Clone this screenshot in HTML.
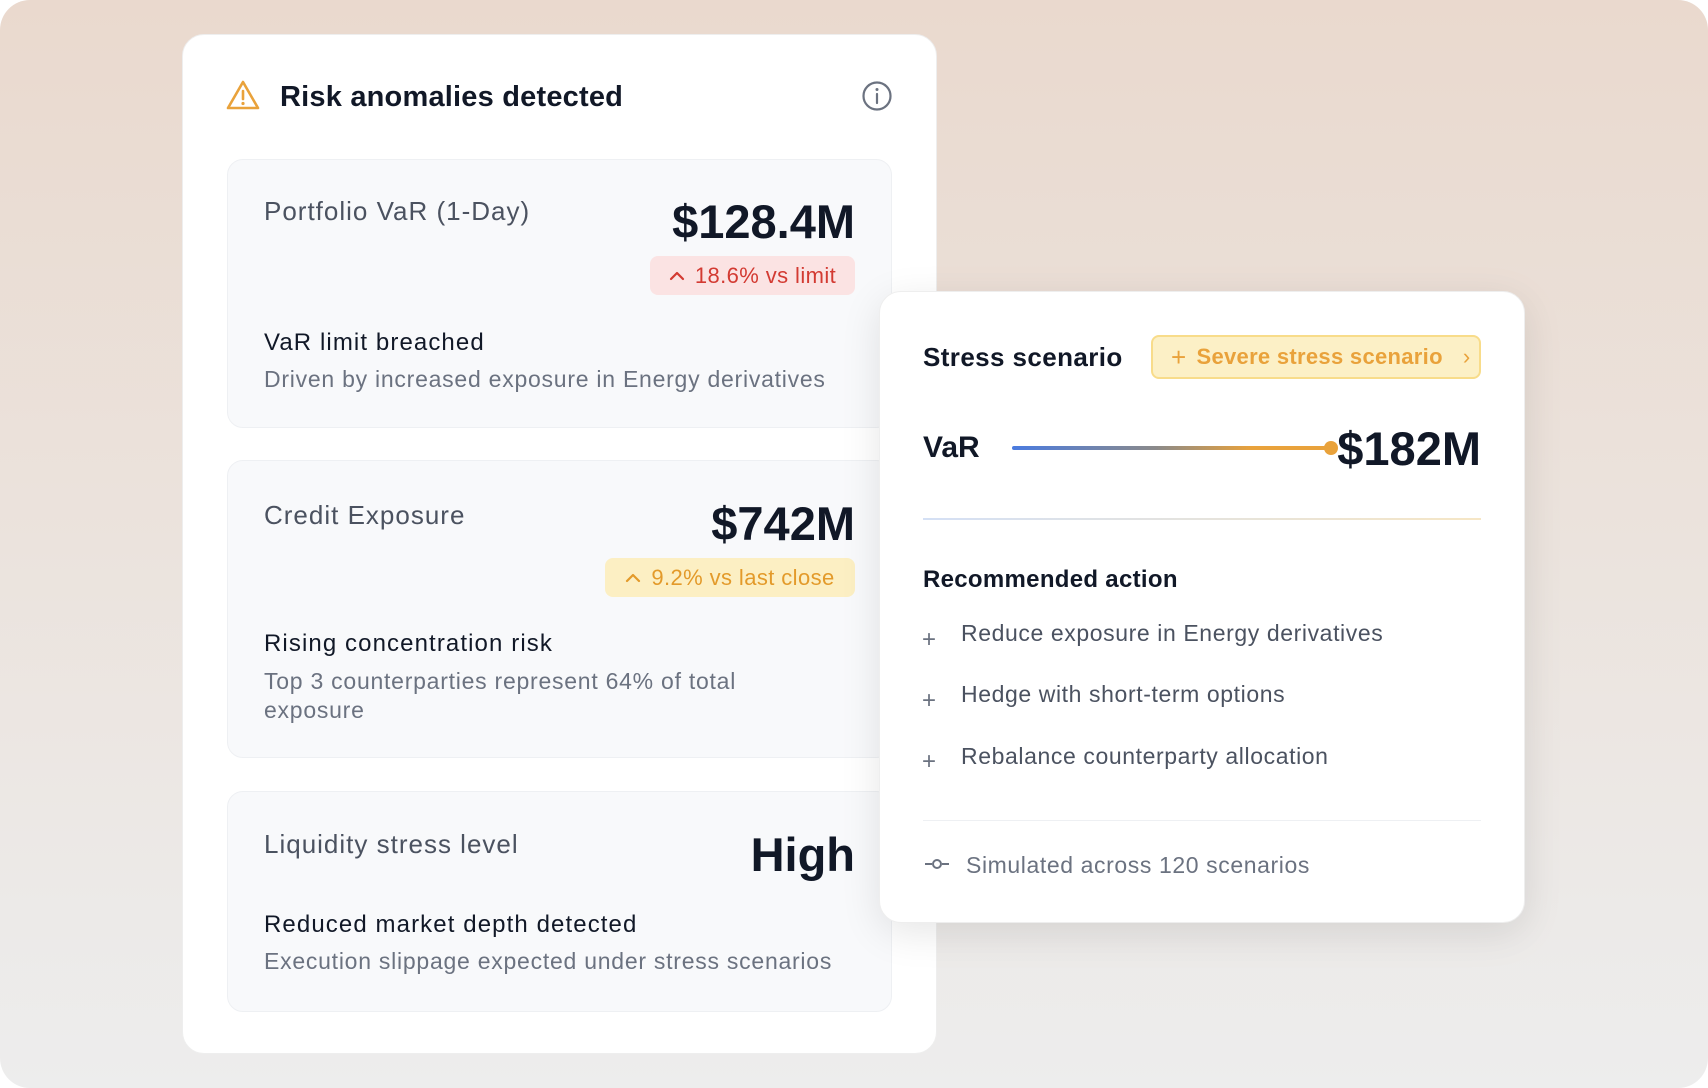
<!DOCTYPE html>
<html><head><meta charset="utf-8"><style>
*{box-sizing:border-box;margin:0;padding:0}
html,body{width:1708px;height:1088px;background:#fff;overflow:hidden}
body{font-family:"Liberation Sans",sans-serif;color:#111827}
.bg{position:absolute;left:0;top:0;width:1708px;height:1088px;border-radius:30px;background:linear-gradient(180deg,#ead9ce 0%,#ebe3dd 50%,#ededed 100%)}
.card{position:absolute;left:182px;top:34px;width:755px;height:1020px;background:#fff;border-radius:22px;border:1px solid #eee}
.abs{position:absolute;white-space:nowrap}
.inner{position:absolute;left:227px;width:665px;background:#f8f9fb;border:1px solid #eef0f3;border-radius:16px}
.lbl{font-size:26px;color:#4b5260;letter-spacing:1px}
.val{font-size:47px;font-weight:bold;color:#111827;text-align:right}
.t{font-size:24px;color:#111827;letter-spacing:1.1px}
.d{font-size:23px;color:#6b7280;letter-spacing:0.75px}
.badge{position:absolute;border-radius:8px;font-size:22px;display:flex;align-items:center;justify-content:center;gap:10px;letter-spacing:0.4px}
.rc{position:absolute;left:879px;top:291px;width:646px;height:632px;background:#fff;border-radius:22px;box-shadow:0 10px 40px rgba(0,0,0,.10);border:1px solid #eee}
.it{font-size:23px;color:#4b5260;letter-spacing:0.6px}
.pl{font-size:24px;color:#6b7280}
</style></head><body>
<div class="bg"></div>
<div class="card"></div>
<svg class="abs" style="left:226px;top:79px" width="34" height="32" viewBox="0 0 34 32"><path d="M17 3 L32 29 L2 29 Z" fill="none" stroke="#e9a23b" stroke-width="2.6" stroke-linejoin="round"/><line x1="17" y1="12" x2="17" y2="20" stroke="#e9a23b" stroke-width="2.6" stroke-linecap="round"/><circle cx="17" cy="24.5" r="1.6" fill="#e9a23b"/></svg>
<div class="abs" style="left:280px;top:81px;font-size:29px;font-weight:bold;color:#111827;letter-spacing:0.2px">Risk anomalies detected</div>
<svg class="abs" style="left:861px;top:80px" width="32" height="32" viewBox="0 0 32 32"><circle cx="16" cy="16" r="13.5" fill="none" stroke="#6b7280" stroke-width="2.2"/><line x1="16" y1="14" x2="16" y2="23" stroke="#6b7280" stroke-width="2.2" stroke-linecap="round"/><circle cx="16" cy="9.5" r="1.5" fill="#6b7280"/></svg>

<div class="inner" style="top:159px;height:269px"></div>
<div class="abs lbl" style="left:264px;top:196px">Portfolio VaR (1-Day)</div>
<div class="abs val" style="left:600px;width:255px;top:194px">$128.4M</div>
<div class="badge" style="left:650px;top:256px;width:205px;height:39px;background:#fbe3e3;color:#d33a32"><svg width="16" height="12" viewBox="0 0 16 12"><path d="M2 9 L8 3 L14 9" fill="none" stroke="#d33a32" stroke-width="2.2" stroke-linecap="round" stroke-linejoin="round"/></svg>18.6% vs limit</div>
<div class="abs t" style="left:264px;top:329px">VaR limit breached</div>
<div class="abs d" style="left:264px;top:366px">Driven by increased exposure in Energy derivatives</div>

<div class="inner" style="top:460px;height:298px"></div>
<div class="abs lbl" style="left:264px;top:500px">Credit Exposure</div>
<div class="abs val" style="left:600px;width:255px;top:496px">$742M</div>
<div class="badge" style="left:605px;top:558px;width:250px;height:39px;background:#fcefc3;color:#e39a2a"><svg width="16" height="12" viewBox="0 0 16 12"><path d="M2 9 L8 3 L14 9" fill="none" stroke="#e39a2a" stroke-width="2.2" stroke-linecap="round" stroke-linejoin="round"/></svg>9.2% vs last close</div>
<div class="abs t" style="left:264px;top:630px">Rising concentration risk</div>
<div class="abs d" style="left:264px;top:667px;line-height:29px">Top 3 counterparties represent 64% of total<br>exposure</div>

<div class="inner" style="top:791px;height:221px"></div>
<div class="abs lbl" style="left:264px;top:829px">Liquidity stress level</div>
<div class="abs val" style="left:600px;width:255px;top:827px">High</div>
<div class="abs t" style="left:264px;top:911px">Reduced market depth detected</div>
<div class="abs d" style="left:264px;top:948px">Execution slippage expected under stress scenarios</div>

<div class="rc"></div>
<div class="abs" style="left:923px;top:342px;font-size:26px;font-weight:bold;letter-spacing:0.4px">Stress scenario</div>
<div class="abs" style="left:1151px;top:335px;width:330px;height:44px;border-radius:8px;background:#fcf0c6;border:2px solid #f8dc8a;color:#e9a23b;font-size:22px;font-weight:bold;display:flex;align-items:center;padding-left:18px;gap:10px;letter-spacing:0.3px"><span style="font-weight:normal;font-size:26px">+</span>Severe stress scenario<span style="font-weight:normal;margin-left:10px">&#8250;</span></div>
<div class="abs" style="left:923px;top:431px;font-size:30px;font-weight:bold">VaR</div>
<div class="abs" style="left:1012px;top:446px;width:320px;height:4px;border-radius:2px;background:linear-gradient(90deg,#4a7be0,#8b8a8a 45%,#e9a23b 75%)"></div>
<div class="abs" style="left:1324px;top:441px;width:14px;height:14px;border-radius:50%;background:#e9a23b"></div>
<div class="abs" style="left:1330px;width:151px;top:421px;font-size:47px;font-weight:bold;text-align:right">$182M</div>
<div class="abs" style="left:923px;top:518px;width:558px;height:2px;background:linear-gradient(90deg,#d4e0f5,#f6e6c5)"></div>
<div class="abs" style="left:923px;top:566px;font-size:24px;font-weight:bold;letter-spacing:0.3px">Recommended action</div>
<div class="abs pl" style="left:922px;top:626px">+</div><div class="abs it" style="left:961px;top:620px">Reduce exposure in Energy derivatives</div>
<div class="abs pl" style="left:922px;top:687px">+</div><div class="abs it" style="left:961px;top:681px">Hedge with short-term options</div>
<div class="abs pl" style="left:922px;top:748px">+</div><div class="abs it" style="left:961px;top:743px">Rebalance counterparty allocation</div>
<div class="abs" style="left:923px;top:820px;width:558px;height:1px;background:#eef0f3"></div>
<svg class="abs" style="left:924px;top:857px" width="26" height="14" viewBox="0 0 26 14"><line x1="1" y1="7" x2="8" y2="7" stroke="#6b7280" stroke-width="2"/><circle cx="13" cy="7" r="4" fill="none" stroke="#6b7280" stroke-width="2"/><line x1="18" y1="7" x2="25" y2="7" stroke="#6b7280" stroke-width="2"/></svg>
<div class="abs it" style="left:966px;top:852px;color:#6b7280">Simulated across 120 scenarios</div>
</body></html>
